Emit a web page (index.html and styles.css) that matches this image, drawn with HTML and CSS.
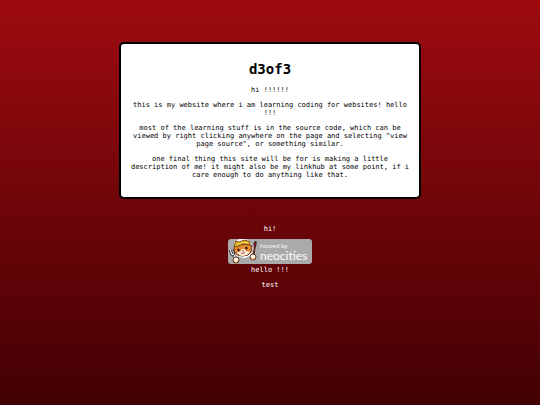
FILE: index.html
```html
<!DOCTYPE html>
<html lang="en">
<head>
  <meta charset="utf-8">
  <meta name="viewport" content="width=device-width, initial-scale=1">
  <title>d3of3</title>
  <link rel="stylesheet" href="styles.css">
</head>
<body>
  <main class="card">
    <h1>d3of3</h1>
    <p>hi !!!!!!</p>
    <p>this is my website where i am learning coding for websites! hello !!!</p>
    <p>most of the learning stuff is in the source code, which can be viewed by right clicking anywhere on the page and selecting "view page source", or something similar.</p>
    <p>one final thing this site will be for is making a little description of me! it might also be my linkhub at some point, if i care enough to do anything like that.</p>
  </main>
  <footer class="footer">
    <p>hi!</p>
    <a class="badge" href="#">
      <svg class="cat" viewBox="0 0 32 27" aria-hidden="true">
        <g stroke="#fff" stroke-width="2" stroke-linejoin="round" stroke-linecap="round" fill="#fff">
          <path d="M6 8 L8 3 L12 1 L18 1 L22 4 L24 9 L22 16 L16 18 L9 16 L6 12Z"/>
          <path d="M2 12 L8 20 M27 4 L26 18"/>
        </g>
        <path d="M6 12 L6 7 L9 6 L20 5 L24 7 L23 13 Q21 17 15 17 Q8 17 6 12Z" fill="#e58a31" stroke="#5b2b17" stroke-width="1"/>
        <path d="M14 10 L16 10 L18 12 L22 13 Q19 17 14 17 Q10 16 9 13 L12 13Z" fill="#fff4df"/>
        <path d="M6 7 L8 2 L11 3 L17 1 L22 3 L22 6 L15 5 L8 8Z" fill="#e4b12b" stroke="#76501b" stroke-width="1"/>
        <path d="M10 5 Q14 2 20 4" fill="none" stroke="#fbdc58"/>
        <path d="M10 10 L11 12 M18 8 L19 10" stroke="#24140e" stroke-width="2"/>
        <path d="M14 12 H16 M13 14 Q15 16 17 13" fill="none" stroke="#b0413e"/>
        <path d="M1 11 L3 16 L5 17 L10 23 M3 11 L5 15 M5 10 L7 15 L5 17" fill="none" stroke="#333" stroke-width="1"/>
        <path d="M27 7 L25 21" stroke="#5f2b20" stroke-width="2"/>
        <path d="M26 7 L26 4 L28 2 L28 6 L27 8Z" fill="#a3262d" stroke="#401a1e" stroke-width="1"/>
        <circle cx="8" cy="21" r="3" fill="#fff4e5" stroke="#5b3425"/>
        <circle cx="25" cy="18" r="3" fill="#fff4e5" stroke="#5b3425"/>
        <path d="M6 22 Q8 25 10 22 M23 19 Q25 22 27 19" fill="none" stroke="#e39b56"/>
      </svg>
      <span class="badge-text">
        <span class="hosted">hosted by</span>
        <span class="brand">neocities</span>
      </span>
    </a>
    <p>hello !!!</p>
    <p>test</p>
  </footer>
</body>
</html>
```
FILE: styles.css
```css
* {
  box-sizing: border-box;
}

html {
  min-height: 100%;
  background: linear-gradient(#9e0b0f, #410003);
}

body {
  margin: 0;
  padding: 42px 16px 16px;
  font: 7px/8px "DejaVu Sans Mono", monospace;
  text-align: center;
}

p {
  margin: 0 0 7px;
}

.card {
  max-width: 302px;
  margin: 0 auto 26px;
  padding: 17px 8px 11px;
  border: 2px solid #000;
  border-radius: 5px;
  background: #fff;
  color: #000;
}

h1 {
  margin: 0 0 9px;
  font-size: 14px;
  line-height: 16px;
}

.footer {
  color: #fff;
}

.footer p:first-child {
  margin-bottom: 6px;
}

.badge {
  display: flex;
  width: 84px;
  height: 25px;
  margin: 0 auto 2px;
  border-radius: 3px;
  background: #aaa;
  color: #fff;
  text-align: left;
  text-decoration: none;
}

.cat {
  flex: none;
  width: 32px;
  height: 27px;
}

.badge-text {
  display: flex;
  flex-direction: column;
  padding-top: 3px;
  white-space: nowrap;
}

.hosted {
  font-family: "Open Sans", sans-serif;
  font-size: 6px;
  line-height: 8px;
}

.brand {
  font-family: Lato, sans-serif;
  font-size: 12px;
  line-height: 12px;
}
```
